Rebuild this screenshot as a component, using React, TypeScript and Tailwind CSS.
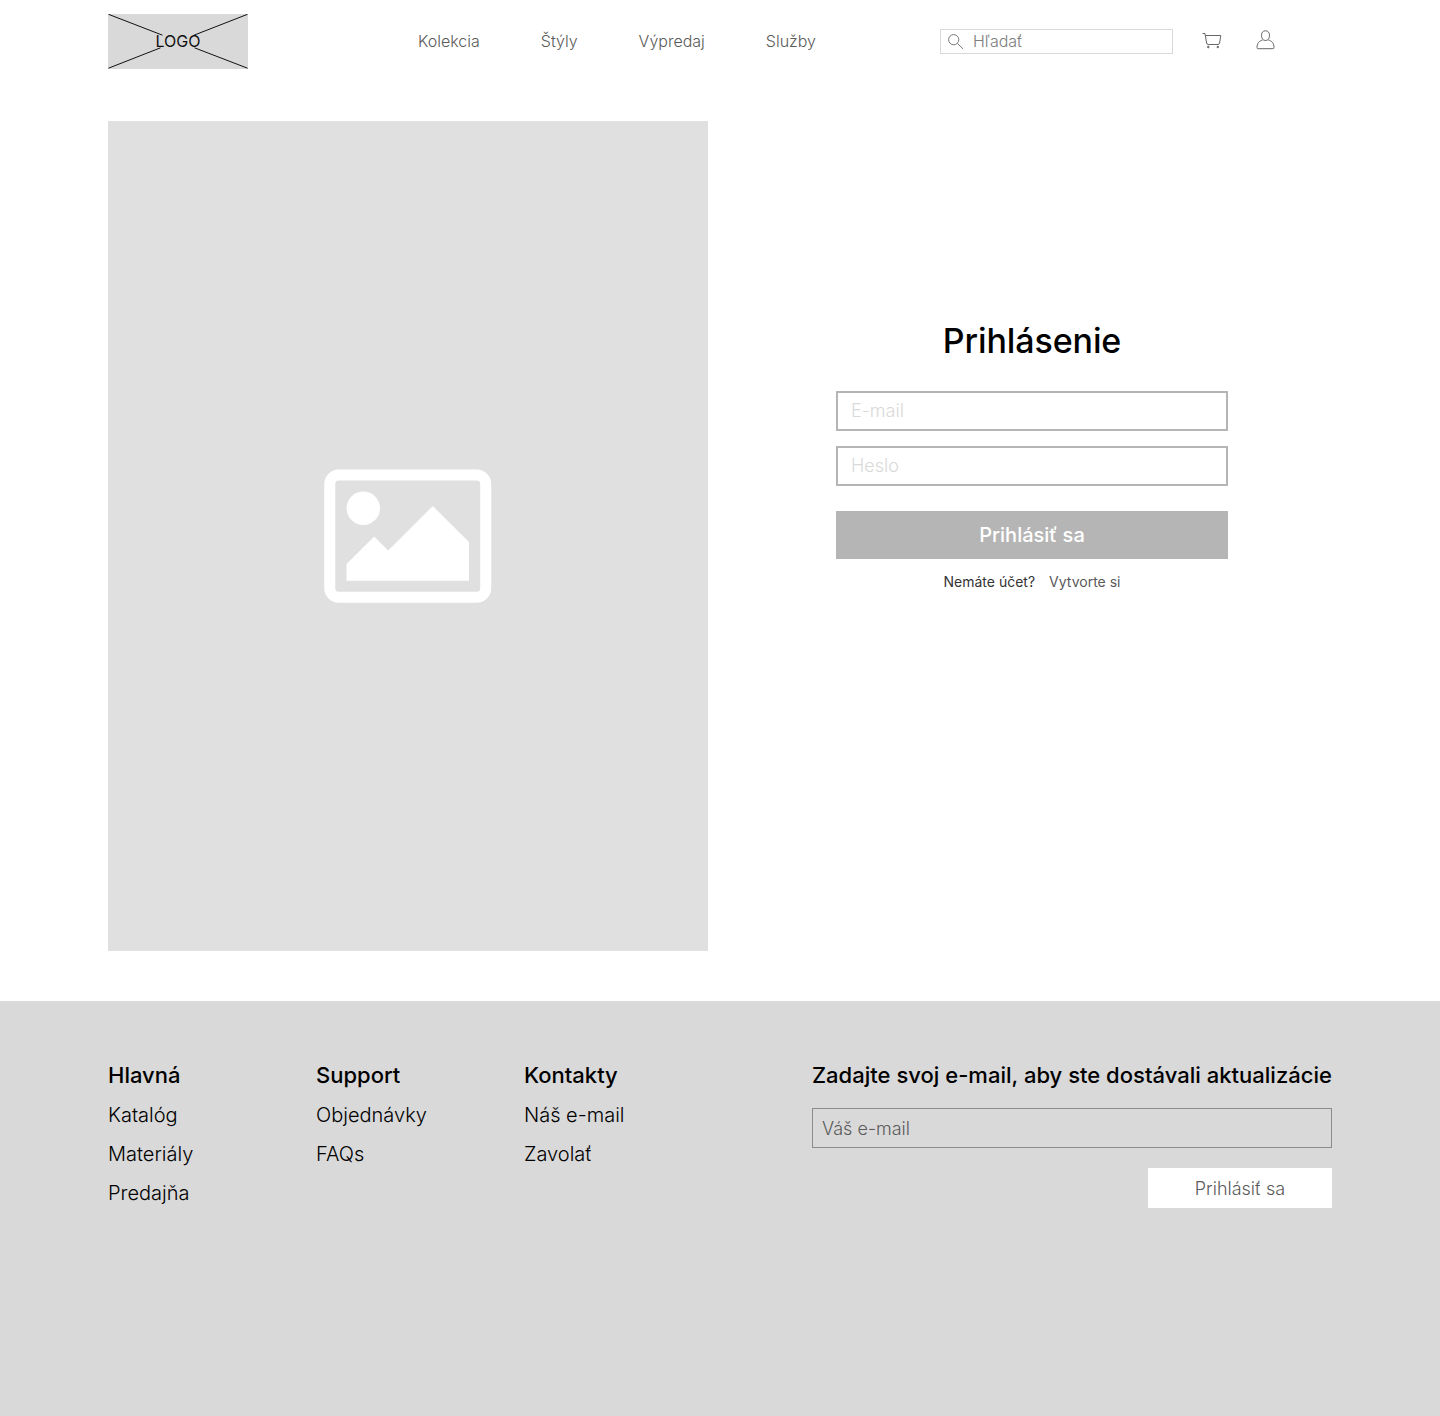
export default function App() {
  return (
    <div className="flex h-[1416px] w-[1440px] flex-col overflow-hidden bg-white font-[Inter,sans-serif] font-light text-black">
      <header className="flex h-[121px] shrink-0 items-start pl-[108px] pt-3.5">
        <div className="relative flex h-[55px] w-[140px] items-center justify-center bg-[#d9d9d9] pb-px">
          <svg className="absolute inset-0" width="140" height="55" viewBox="0 0 140 55" fill="none" stroke="#111">
            <path d="M.5 .3L54.5 21.2M86.5 33.8L139.5 54.2M.5 54.2L52.5 33.8M86 21.2L139.5 .3" />
          </svg>
          <span className="relative text-base leading-5 font-normal text-[#111]">LOGO</span>
        </div>
        <nav className="ml-[170px] flex h-[53px] w-[398px] items-center justify-between text-base text-[#5a5a5a]">
          <a>Kolekcia</a><a>Štýly</a><a>Výpredaj</a><a>Služby</a>
        </nav>
        <div className="ml-[124px] mt-[15px] flex h-[25px] w-[233px] items-center border border-[#d9d9d9] pl-[7px] text-base text-[#7d7d7d]">
          <svg width="16" height="16" viewBox="0 0 16 16" fill="none" stroke="#777"><circle cx="5.7" cy="5.7" r="5.1" /><path d="M9.5 9.5L15.2 15" /></svg>
          <span className="ml-[9px] leading-5 pb-0.5">Hľadať</span>
        </div>
        <svg className="ml-[29px] mt-[17px]" width="20" height="20" viewBox="0 0 20 20" fill="none" stroke="#666" strokeLinejoin="round"><path d="M.5 2.5H3L4.6 12Q4.8 13.5 6.2 13.5H16Q17.3 13.5 17.6 12L18.8 4.5H3.5" /><circle cx="6.3" cy="16" r=".8" fill="#666" /><circle cx="15.8" cy="16" r=".8" fill="#666" /></svg>
        <svg className="ml-[34px] mt-4" width="20" height="20" viewBox="0 0 20 20" fill="none" stroke="#666" strokeLinejoin="round"><path d="M9.5 .8C6.7 .8 5.5 2.8 5.5 5.3C5.5 8.6 7 10.5 9.5 10.5S13.5 8.6 13.5 5.3C13.5 2.8 12.3 .8 9.5 .8Z" /><path d="M6.7 10C2.8 11 1 13.6 1 17.5Q1 18.7 2.2 18.7H16.8Q18 18.7 18 17.5C18 13.6 16.2 11 12.3 10" /></svg>
      </header>
      <main className="flex h-[880px] shrink-0 pl-[108px]">
        <div className="flex h-[830px] w-[600px] items-center justify-center bg-[#e0e0e0]">
          <svg width="168" height="134" viewBox="0 0 168 134" fill="white"><rect x="5.75" y="6" width="156" height="122.3" rx="9" fill="none" stroke="white" strokeWidth="11" /><circle cx="39.3" cy="39.3" r="16.7" /><path d="M22.5 95L50.2 67.5L64.2 81.5L108.8 37L145 73V111.7H22.5Z" /></svg>
        </div>
        <section className="ml-32 flex w-[392px] flex-col items-center pt-[196px]">
          <h1 className="text-[34px] leading-12 font-medium tracking-[-0.1px]">Prihlásenie</h1>
          <div className="mt-[26px] flex h-10 w-full items-center border-2 border-[#b5b5b5] pl-[13px] text-lg text-[#d9d9d9]">E-mail</div>
          <div className="mt-[15px] flex h-10 w-full items-center border-2 border-[#b5b5b5] pl-[13px] text-lg text-[#d9d9d9]">Heslo</div>
          <button className="mt-[25px] h-12 w-full bg-[#b5b5b5] text-xl font-medium text-white">Prihlásiť sa</button>
          <p className="mt-[13px] flex gap-3.5 text-sm font-normal"><span className="text-[#333]">Nemáte účet?</span><a className="text-[#5a5a5a]">Vytvorte si</a></p>
        </section>
      </main>
      <footer className="flex grow bg-[#d9d9d9] pl-[108px] pt-[59px] text-xl">
        <div className="flex w-52 flex-col gap-[9px] leading-[30px]"><h2 className="mb-px text-[22px] font-medium">Hlavná</h2><a>Katalóg</a><a>Materiály</a><a>Predajňa</a></div>
        <div className="flex w-52 flex-col gap-[9px] leading-[30px]"><h2 className="mb-px text-[22px] font-medium">Support</h2><a>Objednávky</a><a>FAQs</a></div>
        <div className="flex w-72 flex-col gap-[9px] leading-[30px]"><h2 className="mb-px text-[22px] font-medium">Kontakty</h2><a>Náš e-mail</a><a>Zavolať</a></div>
        <div className="flex w-[520px] flex-col">
          <h2 className="whitespace-nowrap text-[22px] leading-[30px] font-medium tracking-[0.015px]">Zadajte svoj e-mail, aby ste dostávali aktualizácie</h2>
          <div className="mt-[18px] flex h-10 items-center border border-[#8c8c8c] pt-0.5 pl-[9px] text-lg text-[#5a5a5a]">Váš e-mail</div>
          <button className="mt-5 h-10 w-[184px] self-end bg-white pt-0.5 text-lg text-[#5a5a5a]">Prihlásiť sa</button>
        </div>
      </footer>
    </div>
  );
}
